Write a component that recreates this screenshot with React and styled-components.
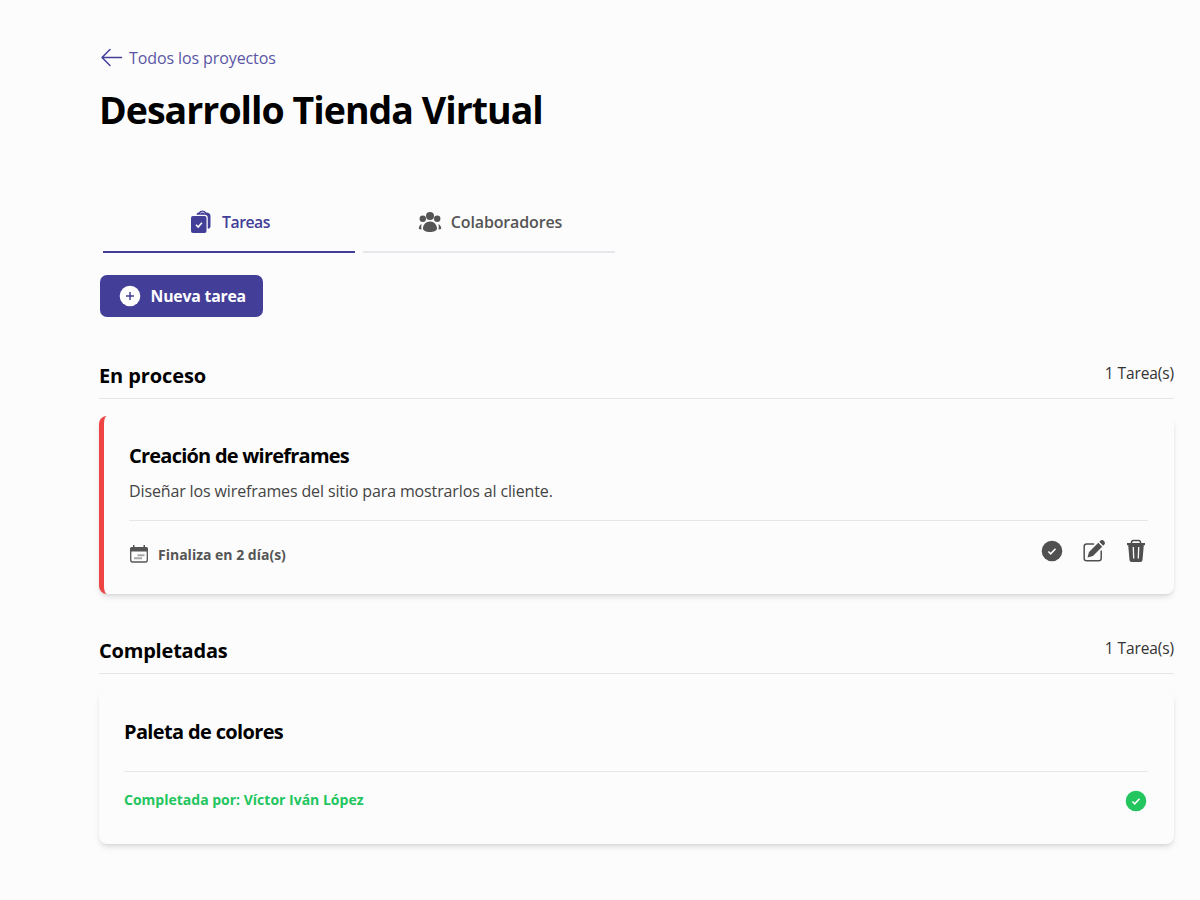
import React from 'react';
import styled, { createGlobalStyle } from 'styled-components';

const Global = createGlobalStyle`
  * { box-sizing: border-box; }
  body { margin: 0; background: #fcfcfc; color: #000; font-family: "Open Sans", "Noto Sans", sans-serif; }
  h1, h2, h3, p { margin: 0; }
  svg { display: block; flex: none; }
`;

const Page = styled.main`
  height: 900px;
  padding: 46px 26px 0 99px;
  overflow: hidden;
`;
const BackLink = styled.a`
  display: flex;
  align-items: center;
  gap: 5px;
  height: 24px;
  padding-left: 1px;
  color: #433e98;
`;
const LinkText = styled.span`
  font-size: 16px;
  letter-spacing: -0.1px;
  color: #5a56a5;
`;
const Text = styled.span`
  font-size: ${p => p.$size || 16}px;
  font-weight: ${p => p.$weight || 400};
  letter-spacing: ${p => p.$track || 0}px;
  white-space: nowrap;
`;
const Title = styled.h1`
  margin-top: 14px;
  height: 53px;
  line-height: 52px;
  display: flex;
`;
const Tabs = styled.nav`
  display: flex;
  gap: 8px;
  margin: 55px 0 22px 4px;
`;
const Tab = styled.button`
  display: flex;
  justify-content: center;
  align-items: center;
  gap: ${p => (p.$active ? 10 : 9)}px;
  width: 252px;
  height: 61px;
  padding: 0 0 0 2px;
  border: 0;
  border-bottom: 2px solid ${p => (p.$active ? '#433e98' : '#e5e7eb')};
  background: none;
  font-family: inherit;
  color: ${p => (p.$active ? '#433e98' : '#555')};
`;
const NewTask = styled.button`
  display: flex;
  align-items: center;
  gap: 10px;
  width: 163px;
  height: 42px;
  margin-left: 0.5px;
  padding: 0 0 0 19px;
  border: 0;
  border-radius: 7px;
  background: #433e98;
  color: #fff;
  font-family: inherit;
`;
const Section = styled.section`
  margin-top: ${p => p.$top}px;
`;
const SectionHead = styled.header`
  display: flex;
  justify-content: space-between;
  height: 49px;
  border-bottom: 1px solid #e5e7eb;
  line-height: 52px;
`;
const Count = styled.div`
  line-height: 47px;
  color: #333;
`;
const Card = styled.article`
  margin-top: ${p => p.$top}px;
  height: ${p => p.$height}px;
  padding: 25px 26px 0 25px;
  border-left: ${p => (p.$urgent ? '5px solid #ef4444' : '0')};
  border-radius: 8px;
  background: #fcfcfc;
  box-shadow: 0 4px 6px -1px rgba(0, 0, 0, .11), 0 2px 4px -2px rgba(0, 0, 0, .11);
`;
const CardTitle = styled.h3`
  display: flex;
  height: 31px;
  line-height: ${p => p.$line || 30}px;
`;
const Description = styled.p`
  height: 36px;
  padding-top: 3px;
  line-height: 32px;
  color: #444;
`;
const CardFoot = styled.footer`
  display: flex;
  justify-content: space-between;
  margin-top: ${p => p.$top}px;
  padding-top: ${p => p.$pad}px;
  border-top: 1px solid #e5e7eb;
`;
const Status = styled.div`
  display: flex;
  align-items: center;
  gap: 9px;
  height: 22px;
  margin-top: ${p => p.$shift || 0}px;
  color: ${p => p.$color};
`;
const Actions = styled.div`
  display: flex;
  gap: 18px;
  color: #505050;
`;

const BackIcon = () => (
  <svg width="24" height="24" viewBox="0 0 24 24" fill="none" stroke="currentColor" strokeWidth="1.5" strokeLinecap="round" strokeLinejoin="round"><path d="M21.500 11.500H2M10 3.500l-8 8 8 8" /></svg>
);
const TasksIcon = () => (
  <svg width="22" height="24" viewBox="0 0 22 24"><path fill="currentColor" d="M6.500 4.800C6.700 3.300 7.600 2.800 8.800 2.600c.7-1.300 2-2 3.700-2s3 .7 3.700 2c2.700.2 4.300 1.200 4.300 3.400v10c0 1.500-.8 2.600-2.700 2.800V8c0-2-1.100-3.200-3.300-3.200z" /><path fill="none" stroke="#fcfcfc" strokeWidth=".8" d="M10.300 3.200c.6-1.300 3.800-1.300 4.400 0" /><rect x="1" y="6" width="15.500" height="17" rx="2" fill="currentColor" /><path d="m6 14.800 2.200 2.200 3.700-4.300" fill="none" stroke="#fff" strokeWidth="1.600" /></svg>
);
const PeopleIcon = () => (
  <svg width="24" height="22" viewBox="0 0 24 22" fill="currentColor"><circle cx="12" cy="5" r="4" /><circle cx="4.800" cy="7.800" r="3.200" /><circle cx="19.200" cy="7.800" r="3.200" /><path d="M12 10.500c4 0 7 3.300 7 7 0 2-3 3.500-7 3.500s-7-1.500-7-3.500c0-3.700 3-7 7-7zM3.500 13C1.600 14 .8 15.800.8 18L3.500 18.500c-.4-2-.4-3.800 0-5.500zM20.500 13c1.900 1 2.700 2.800 2.700 5l-2.700.5c.4-2 .4-3.800 0-5.500z" /></svg>
);
const PlusIcon = () => (
  <svg width="22" height="22" viewBox="0 0 22 22"><circle cx="11" cy="11" r="10.300" fill="currentColor" /><path d="M11 7v8M7 11h8" stroke="#433e98" strokeWidth="1.500" /></svg>
);
const CheckIcon = () => (
  <svg width="24" height="24" viewBox="0 0 24 24"><circle cx="12" cy="12" r="10.300" fill="currentColor" /><path d="m8.400 12.500 2.300 2.300 4.800-5" fill="none" stroke="#fcfcfc" strokeWidth="1.600" /></svg>
);
const CalendarIcon = () => (
  <svg width="20" height="20" viewBox="0 0 20 20"><rect x="1.700" y="3.700" width="16.600" height="14.300" rx="2" fill="none" stroke="currentColor" strokeWidth="1.300" /><path fill="currentColor" d="M1 7.500V5c0-1.500 1-2 2-2h1V1h1.500v2h9V1H16v2h1c1.500 0 2 .8 2 2v2.500z" /><path d="M8.500 11.200h7M5 14.200h8" stroke="currentColor" strokeWidth="2" opacity=".5" /></svg>
);
const EditIcon = () => (
  <svg width="24" height="24" viewBox="0 0 24 24"><path d="M11.500 5H4.700C3 5 2.200 6 2.200 7.500v12c0 1.500 1 2.300 2.500 2.300h12c1.500 0 2.500-1 2.500-2.300V12" fill="none" stroke="currentColor" strokeWidth="1.500" strokeLinecap="round" /><path d="m5.500 18.500 1.500-5.500L16.300 3.800l3.900 3.900-9.200 9.200zM17.300 2.800 18.800 1.400c2-1.500 5.200 1.700 3.800 3.800l-1.400 1.500z" fill="currentColor" /></svg>
);
const TrashIcon = () => (
  <svg width="24" height="24" viewBox="0 0 24 24"><path d="M7.500 5V3.500c0-1.200.8-2 2-2h5c1.200 0 2 .8 2 2V5" fill="none" stroke="currentColor" strokeWidth="1.500" /><path fill="currentColor" d="M3 4h18v2.200h-1.200L18.500 21c-.1 1.300-1 2-2.200 2H7.700c-1.200 0-2.100-.7-2.200-2L4.200 6.200H3z" /><path d="m9.300 8 .4 11.500M14.700 8l-.4 11.500" stroke="#fcfcfc" strokeWidth="1.300" /></svg>
);

export default function App() {
  return (
    <Page>
      <Global />
      <BackLink><BackIcon /><LinkText>Todos los proyectos</LinkText></BackLink>
      <Title><Text $size={37.5} $weight={700} $track={-0.98}>Desarrollo Tienda Virtual</Text></Title>
      <Tabs>
        <Tab $active><TasksIcon /><Text $weight={600} $size={15.8} $track={-0.5}>Tareas</Text></Tab>
        <Tab><PeopleIcon /><Text $weight={600} $track={-0.15}>Colaboradores</Text></Tab>
      </Tabs>
      <NewTask><PlusIcon /><Text $size={15.8} $weight={700} $track={-0.2}>Nueva tarea</Text></NewTask>
      <Section $top={33}>
        <SectionHead>
          <Text as="h2" $size={20} $weight={700} $track={-0.1}>En proceso</Text>
          <Count><Text $size={15.5} $track={-0.1}>1 Tarea(s)</Text></Count>
        </SectionHead>
        <Card $urgent $top={17} $height={178}>
          <CardTitle><Text $size={20} $weight={700} $track={-0.77}>Creación de wireframes</Text></CardTitle>
          <Description><Text $track={-0.13}>Diseñar los wireframes del sitio para mostrarlos al cliente.</Text></Description>
          <CardFoot $top={12} $pad={18}>
            <Status $color="#555" $shift={4}><CalendarIcon /><Text $size={14} $weight={700}>Finaliza en 2 día(s)</Text></Status>
            <Actions><CheckIcon /><EditIcon /><TrashIcon /></Actions>
          </CardFoot>
        </Card>
      </Section>
      <Section $top={31}>
        <SectionHead>
          <Text as="h2" $size={20} $weight={700} $track={-0.2}>Completadas</Text>
          <Count><Text $size={15.5} $track={-0.1}>1 Tarea(s)</Text></Count>
        </SectionHead>
        <Card $top={17} $height={153}>
          <CardTitle $line={32}><Text $size={20} $weight={700} $track={-0.65}>Paleta de colores</Text></CardTitle>
          <CardFoot $top={24} $pad={18}>
            <Status $color="#22c55e" $shift={-2}><Text $size={14} $weight={700}>Completada por: Víctor Iván López</Text></Status>
            <Status $color="#22c55e"><CheckIcon /></Status>
          </CardFoot>
        </Card>
      </Section>
    </Page>
  );
}
